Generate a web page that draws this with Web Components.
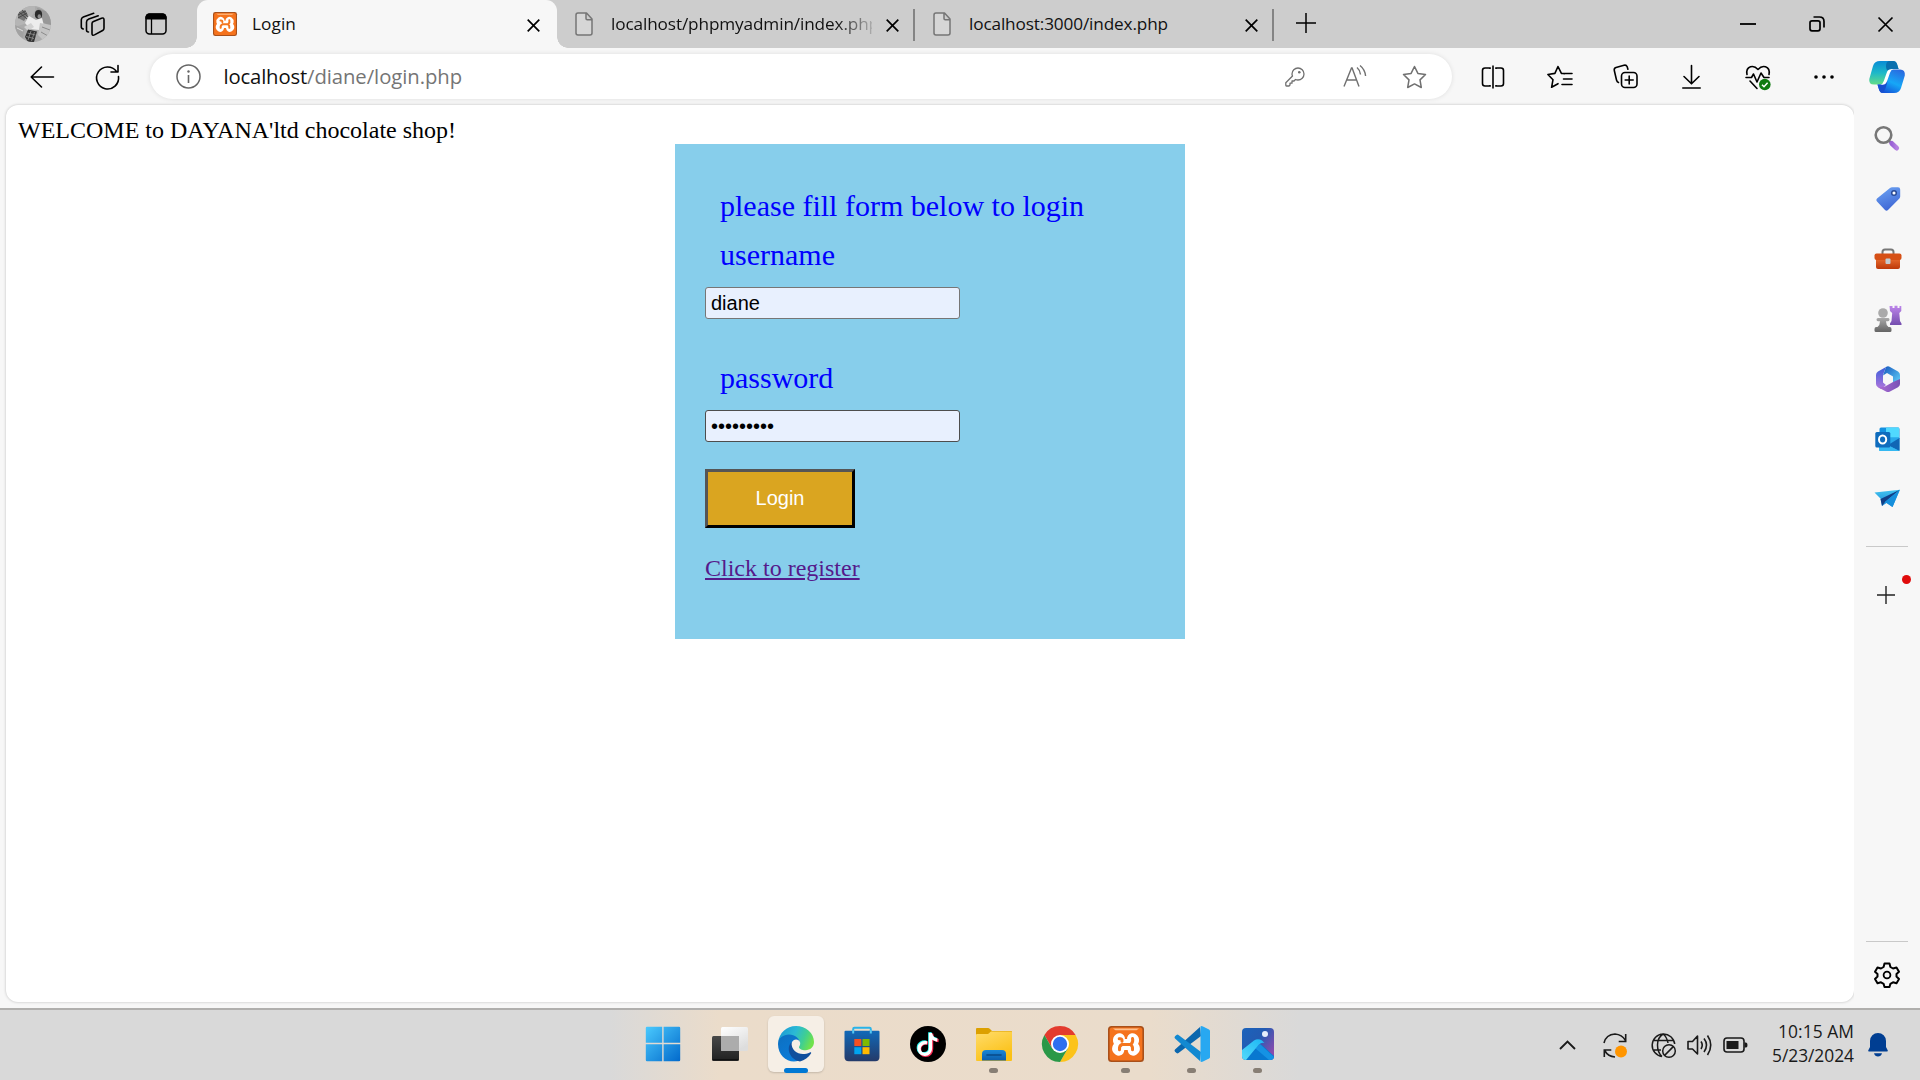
<!DOCTYPE html>
<html lang="en">
<head>
<meta charset="utf-8">
<title>Login</title>
<style>
html,body{margin:0;padding:0}
body{width:1920px;height:1080px;overflow:hidden;background:#f7f7f7;font-family:"Open Sans","Noto Sans",sans-serif}
</style>
</head>
<body>
<desktop-screen></desktop-screen>
<script>
const XAMPP = `<rect width="36" height="36" rx="3.5" fill="#a9501a"/><rect x="1.6" y="1.6" width="32.8" height="32.8" rx="2.5" fill="#f5731d"/><path d="M5 2.500h26l-2.500 1.800h-21z" fill="#ffc08c"/>
<path d="M11.500 12.800C8.500 15 13 16.500 12.500 18.500 12 20.500 7.500 22 10.800 24.200M24.500 12.800C27.500 15 23 16.500 23.500 18.500 24 20.500 28.500 22 25.200 24.200M12.500 18.500h11" fill="none" stroke="#fff" stroke-width="11" stroke-linecap="round" stroke-linejoin="round"/>
<path d="M11.200 12.800Q14.500 12.200 14 15.200M24.500 12.500q1 3.500-1.500 5.600M24.500 23.800q.5-3.800-2-5.300M11.500 23.800q-.5-4 2.500-5.300H23" fill="none" stroke="#f4761f" stroke-width="3" stroke-linecap="round"/>`;
const K = 'fill="none" stroke="currentColor" stroke-width="1.6" stroke-linecap="round" stroke-linejoin="round"';
/* name: [width, height, markup] */
const ICONS = {
avatar:[36,36,`<defs><clipPath id="c"><circle cx="18" cy="18" r="18"/></clipPath></defs><g clip-path="url(#c)"><path fill="#ababab" d="M0 0h36v36H0z"/><path d="M0 0h20v5l-8 12-12 4z" fill="#b5b5b5"/><path d="M3 6l7-2 3 5-4 6-6-3z" fill="#777"/><path d="M4 6l8 7M7 4l6 7M3 12l9-5M3 9l8-4" stroke="#3c3c3c" stroke-width=".8"/><path d="M22 2l14 5v13l-9-4z" fill="#989898"/><ellipse cx="23.500" cy="8.500" rx="3.600" ry="4.400" fill="#2b2b2b"/><ellipse cx="24.300" cy="10.500" rx="1.700" ry="2.300" fill="#8b8b8b"/><path d="M14 10l7 4 6-2 2 8-5 4-9-1-5-6z" fill="#ededed"/><path d="M9 21l7-4 3 4-6 4z" fill="#d2d2d2"/><path d="M13 23.500l9 2-3 10.500h-6l-3-5z" fill="#343434"/><path d="M12.500 27l8 2M11 30.500l8 2M16 25l-3 9M19.500 26l-3 9" stroke="#929292" stroke-width=".8"/><path d="M25 17l11 2v9l-8 6-5-5z" fill="#c4c4c4"/><path d="M26 26l7 4M27 21l8 3" stroke="#8a8a8a"/><path d="M0 19l9 4-1 9-8-4z" fill="#a2a2a2"/><path d="M2 22l6 3" stroke="#ddd"/></g>`],
workspaces:[26,26,`<g ${K}><path d="M12 12.500q0-1.500 1.500-2.100l8-3.200q2.500-.9 2.500 1.600v8.400q0 1.500-1.400 2.300l-8.100 4.400q-2.500 1.200-2.500-1.500z"/><path d="M18.200 4.700L8.800 8.100Q6.500 9 6.500 11v8q0 2 2 2M13.700 2.200L3.300 6Q1.300 6.800 1.300 8.800v7q0 2 2 2.200"/></g>`],
vertical:[22,22,`<rect x="1" y="1" width="20" height="20" rx="3.500" fill="none" stroke="#000" stroke-width="1.500"/><path d="M1 6V4q0-3 3-3h14q3 0 3 3v2z" stroke="#000"/><path d="M6.500 6v15" stroke="#000" stroke-width="1.300"/>`],
xampp:[24,24,`<g transform="scale(.6667)">${XAMPP}</g>`],
close:[13,13,`<path d="M.7.700l11.600 11.600M12.300.7L.7 12.300" stroke="#000" stroke-width="1.700" fill="none"/>`],
file:[18,24,`<path d="M3 1h8.500L17 7v14q0 2-2 2H3q-2 0-2-2V3q0-2 2-2zM11 1v5.500q0 1.200 1.200 1.200H17" fill="#d6d6d6" stroke="#757575" stroke-width="1.500" stroke-linejoin="round"/>`],
plus:[20,20,`<path d="M10 0v20M0 10h20" stroke="#000" stroke-width="1.500"/>`],
min:[16,16,`<path d="M0 8h16" stroke="#000" stroke-width="1.800"/>`],
restore:[16,16,`<rect x="1" y="4.800" width="10" height="10" rx="2" fill="none" stroke="#000" stroke-width="1.700"/><path d="M4.500 1h6Q15 1 15 5.500v6" fill="none" stroke="#000" stroke-width="1.700"/>`],
wclose:[15,15,`<path d="M.5.500l14 14M14.500.5l-14 14" stroke="#000" stroke-width="1.700"/>`],
back:[24,22,`<path d="M23.500 11H1.200M11.500 1L1.200 11l10.300 10" ${K}/>`],
refresh:[25,25,`<path d="M21.500 7.500A11 11 0 1 0 23.500 12.500M23 1.500V8h-7" ${K}/>`],
info:[25,25,`<circle cx="12.500" cy="12.500" r="11.500" fill="none" stroke="#666" stroke-width="1.500"/><path d="M12.500 11v8" stroke="#666" stroke-width="1.600"/><circle cx="12.500" cy="7.500" r="1.200" fill="#666"/>`],
key:[20,20,`<path d="M13 1a6 6 0 0 1 0 12q-1.300 0-2.500-.5L9 14H7v2.200H5V18l-1 1H1.500q-.7 0-.7-.8V15.800L7.500 9Q7 8 7 7a6 6 0 0 1 6-6z" fill="none" stroke="#707070" stroke-width="1.300" stroke-linejoin="round"/><circle cx="14.300" cy="5.200" r="1.300" fill="#707070"/>`],
read:[24,22,`<path d="M1 21.500L8.500 3h.6L16 21.500M3.600 15h10M14 2.500q3 2.500 3.500 7M17 .5q5 4 5.600 10.500" fill="none" stroke="#707070" stroke-width="1.400"/>`],
star:[25,24,`<path d="M12.500 1.500l3.400 6.900 7.600 1.100-5.500 5.400 1.300 7.600-6.800-3.600-6.800 3.600L7 14.900 1.500 9.500l7.600-1.100z" fill="none" stroke="#707070" stroke-width="1.500" stroke-linejoin="round"/>`],
split:[24,24,`<path d="M9 3H4Q1.500 3 1.500 5.500v13Q1.500 21 4 21h5zM15 3h5q2.500 0 2.500 2.500v13Q22.500 21 20 21h-5z" fill="none" stroke="currentColor" stroke-width="1.600"/><path d="M9 4v16M15 4v16" stroke="#f7f7f7" stroke-width="2.200"/><path d="M12 .5v23" stroke="currentColor" stroke-width="1.600"/>`],
favs:[26,24,`<path d="M14.500 8.400h-.1L11 1.500 7.900 8.400.9 9.500 6 14.700l-1.400 7.600 6.400-3.600M17.500 8.600l-3-.3M15 8.500h10M16.500 14H25M15 19.500h10" ${K}/>`],
collect:[26,25,`<rect x="8.500" y="8.500" width="15.500" height="15" rx="3.500" ${K}/><path d="M16.200 12v8M12.200 16h8M5.500 18.500Q4 18 3.500 16L1.300 6.500q-.5-2.300 1.700-3L11 1.300q2.300-.6 3.200 1.500l.7 2.400" ${K}/>`],
download:[19,24,`<path d="M9.500.5v18M2 11.500l7.500 7.300 7.500-7.300M.8 23h17.400" ${K}/>`],
heart:[26,26,`<path d="M2 9.500Q.8 3.500 5.500 1.800q4-1.300 7.500 2.700 3.500-4 7.500-2.700Q25.200 3.500 24 9.500M1 12.500h5.500l2-3.500 3.500 8 4-9 3 4.500h5M5 16l7 7.500" ${K}/><circle cx="19.800" cy="19.500" r="5.800" fill="#0f7b10"/><path d="M17 19.700l2 2 3.600-4" fill="none" stroke="#fff" stroke-width="1.500"/>`],
dots:[22,6,`<circle cx="3" cy="3" r="1.800"/><circle cx="11" cy="3" r="1.800"/><circle cx="19" cy="3" r="1.800"/>`],
copilot:[36,32,`<defs><linearGradient id="a" x1=".2" y1="0" x2=".2" y2="1"><stop stop-color="#098bd5"/><stop offset=".5" stop-color="#1db8c9"/><stop offset="1" stop-color="#62dc87"/></linearGradient><linearGradient id="b" x1=".8" y1="0" x2=".3" y2="1"><stop stop-color="#2a69df"/><stop offset=".55" stop-color="#16a7f7"/><stop offset="1" stop-color="#1454d8"/></linearGradient></defs><path d="M11 0h13q3 0 4 3l1.500 5H24q-3 0-4 3l-3 9q-1 3.500-5 3.500H5Q-.5 23.500.3 18L4 5Q5.500 0 11 0z" fill="url(#a)"/><path d="M24 0q3 0 4 3l1.600 5H23q-3 0-3.700 2Q17 9 17 5q0-5 4-5z" fill="#096fae"/><path d="M24 8.500h7q5.500 0 4.800 6L32 27q-1.500 5-7 5H14q-3 0-4-3.500l-1.500-5H13q3 0 4-3l2.800-8.500q1-3.500 4.200-3.500z" fill="url(#b)"/><path d="M8.500 23.500H13q3 0 4-3L18 17q1 4-1 9-2 5-4 6-2-.5-3-3.500z" fill="#174fcf"/><path d="M24.500 8.300h-2.200q-3.500 0-4.500 3.200l-3 8.500q-1 3.200-3.500 3.700h2.200q3.200 0 4.500-3.500l3-8.500q1-3 3.500-3.400z" fill="#fff"/>`],
search:[26,26,`<defs><linearGradient id="a"><stop stop-color="#9a62d6"/><stop offset="1" stop-color="#b581e0"/></linearGradient></defs><circle cx="9.500" cy="9" r="7.800" fill="none" stroke="#777" stroke-width="2.600"/><path d="M15 14.800l4 3.800" stroke="#777" stroke-width="2.500"/><path d="M17.800 17.500l4.800 4.500" stroke="url(#a)" stroke-width="5" stroke-linecap="round"/>`],
tag:[25,25,`<defs><linearGradient id="a" x2=".4" y2="1"><stop stop-color="#6fa6f4"/><stop offset="1" stop-color="#4069d6"/></linearGradient></defs><path d="M14 1q1-.7 2-.7h6q2.200 0 2.200 2.200v7q0 1-.8 2L12 23q-1.500 1.500-3 0L1 14.500q-1.500-1.500 0-3z" fill="url(#a)"/><circle cx="18" cy="6" r="2.300" fill="#fff" stroke="#294a96" stroke-width="1.500"/>`],
tools:[28,22,`<defs><linearGradient id="a" x2="0" y2="1"><stop stop-color="#ee7334"/><stop offset="1" stop-color="#bd390a"/></linearGradient></defs><path d="M8.500 6.500V4q0-2.500 2.500-2.500h6q2.500 0 2.500 2.500v2.500" fill="none" stroke="#777" stroke-width="2"/><rect x="2" y="9" width="24" height="12" rx="2" fill="url(#a)"/><rect x=".5" y="5.500" width="27" height="6.500" rx="2" fill="#d65016"/><rect x="11.500" y="10.500" width="5" height="5.500" rx="1" fill="#c4cbd0"/>`],
chess:[28,28,`<defs><linearGradient id="a" x2="0" y2="1"><stop stop-color="#bd85ea"/><stop offset="1" stop-color="#744eae"/></linearGradient><linearGradient id="b" x2="0" y2="1"><stop stop-color="#aaa"/><stop offset="1" stop-color="#646464"/></linearGradient></defs><path d="M15.500 1h3v2h2V.8h3V3h2V1h1.800v5l-2 2 .7 8 1.500 2.500V20H16v-1.500l1.500-2.500.7-8-2.200-2z" fill="url(#a)"/><circle cx="9" cy="8" r="4.800" fill="#aaa"/><path d="M4 13q-1.500 0-1.500 1.500T4 16.200h2Q6 20 3.500 22H2.200Q.5 22 .5 24v1.500q0 1.500 1.500 1.500h14q1.500 0 1.500-1.500V24q0-2-1.700-2h-1.300Q12 20 12 16.200h2q1.500 0 1.500-1.700T14 13z" fill="url(#b)"/>`],
m365:[24,26,`<defs><linearGradient id="a" x1="0" y1="0" x2="0" y2="1"><stop stop-color="#3a5fdb"/><stop offset="1" stop-color="#b176dc"/></linearGradient><linearGradient id="b" y1="0" x2="1" y2="1"><stop stop-color="#1557bd"/><stop offset="1" stop-color="#64d4fb"/></linearGradient><linearGradient id="c" x2="1"><stop stop-color="#ac6dd6"/><stop offset="1" stop-color="#7752b4"/></linearGradient></defs><path d="M10 1L2 5.500Q0 6.800 0 9v9q0 2 2 3.300l3 1.700 5-4-3-2.500V9z" fill="url(#a)"/><path d="M10 1q2-1.300 4 0l8 4.500Q24 6.800 24 9v9l-7-2V10.500L11 7l-4 2.500z" fill="url(#b)"/><path d="M24 13v5q0 2-2 3.300L14 25.500q-2 1-4 0L2 21.300l7-.8 8-4.500z" fill="url(#c)"/><path d="M12 8.500l4.300 2.500v4.500L12 18l-4.300-2.500V11z" fill="#f7f7f7"/>`],
outlook:[25,25,`<path d="M6 .5h17q1.500 0 1.500 1.500v10H4.500V2Q4.500.5 6 .5z" fill="#1490df"/><path d="M11 .5h13v10H11z" fill="#50d9ff"/><path d="M4 11h20.500v11.500q0 1.500-1.500 1.500H5.500Q4 24 4 22.500z" fill="#28a8ea"/><path d="M24.500 11v13L13 18z" fill="#1066b5"/><path d="M4 20l8-2 12.500 6H5.500Q4 24 4 22.500z" fill="#35b8f1"/><rect x=".3" y="5" width="15" height="15.500" rx="1.500" fill="#0f6cbd"/><ellipse cx="7.600" cy="12.500" rx="3.600" ry="4" fill="none" stroke="#fff" stroke-width="2"/>`],
send:[27,20,`<defs><linearGradient id="a" x2="0" y2="1"><stop stop-color="#43c3ef"/><stop offset="1" stop-color="#1688d8"/></linearGradient></defs><path d="M.5 3.500L26 .7 18.500 18 12.500 14 8 17 6.500 9.500z" fill="url(#a)"/><path d="M25.800.8L6.500 10 8 17l3-4z" fill="#123f86"/><path d="M25.800.8L11 12.800l7.500 5.200z" fill="#168fdc"/>`],
plus2:[18,18,`<path d="M9 0v18M0 9h18" stroke="#222" stroke-width="1.400"/>`],
gear:[26,26,`<path d="M10.500 1.500h5l.9 3.500 2.600 1.500 3.500-1 2.500 4.300L22.500 12v2.500L25 17l-2.500 4.300-3.500-1-2.600 1.500-.9 3.200h-5l-.9-3.200L7 20.300l-3.500 1L1 17l2.500-2.500V12L1 9.800l2.500-4.300 3.500 1L9.600 5z" ${K} style="stroke-width:2"/><circle cx="13" cy="13" r="3.400" fill="none" stroke="#000" stroke-width="1.800"/>`],
start:[36,36,`<defs><linearGradient id="a" gradientUnits="userSpaceOnUse" x1="0" y1="0" x2="36" y2="36"><stop stop-color="#4cccff"/><stop offset="1" stop-color="#0067ca"/></linearGradient></defs><g fill="url(#a)"><path d="M2 .8h15.200v15.900H.8V2q0-1.200 1.200-1.200zM18.600.8H34q1.200 0 1.200 1.200v14.700H18.600zM.8 18.300h16.400v16.900H2Q.8 35.200.8 34zM18.600 18.300h16.600V34q0 1.200-1.200 1.200H18.600z"/></g>`],
taskview:[36,36,`<defs><linearGradient id="a" x2="0" y2="1"><stop stop-color="#484848"/><stop offset="1" stop-color="#202020"/></linearGradient><linearGradient id="b" x2=".6" y2="1"><stop stop-color="#fff"/><stop offset="1" stop-color="#ddd"/></linearGradient></defs><rect y="10" width="27" height="25" rx="1.500" fill="url(#a)"/><rect x="9" y="1" width="27" height="24" rx="1.500" fill="url(#b)"/><path d="M9 10h18v15H10.500Q9 25 9 23.500z" fill="#acacac"/><path d="M1 33.500h25" stroke="#111"/>`],
edge:[36,36,`<defs><linearGradient id="a" x1="0" y1=".2" x2="1" y2=".5"><stop stop-color="#1a98d4"/><stop offset=".45" stop-color="#2bb9d5"/><stop offset=".75" stop-color="#40cf91"/><stop offset="1" stop-color="#70e24b"/></linearGradient><linearGradient id="b" x1="0" y1="0" x2=".7" y2="1"><stop stop-color="#0d6fc0"/><stop offset="1" stop-color="#0b7ddb"/></linearGradient></defs><path d="M.2 16.500C1 7 8.500 0 18 0c10 0 18 7.200 18 16 0 5-4 8.200-8.500 8.200-4 0-6.500-1.600-6.500-3 0-1 1.200-1.500 1.200-4 0-3.500-3.500-6-8-6C7 11.200.2 14 .2 16.500z" fill="url(#a)"/><path d="M0 18C0 12 5.500 8.500 11 8.500c6 0 10.500 4 11 8-.5-1.800-2-3-4-3-3 0-5 3-5 7 0 7 6 12 12 11.800C15 40 0 33 0 18z" fill="url(#b)"/><path d="M13.500 16C7.500 22 12 34 22 35.400c4.500-1 8.500-4 11-7.900.6-1-.2-1.700-1.200-1.100-8 4.100-18.800.6-18.300-10.400z" fill="#114f9d"/>`],
store:[36,36,`<defs><linearGradient id="a" x2="0" y2="1"><stop stop-color="#1169b8"/><stop offset="1" stop-color="#243a69"/></linearGradient></defs><path d="M9.200 8V3q0-1.200 1.200-1.200h15.200q1.200 0 1.200 1.200v5" fill="none" stroke="#29b3e9" stroke-width="2"/><path d="M.5 5.800q0-1 1-1h33q1 0 1 1V31q0 4.200-4.200 4.200H4.700Q.5 35.200.5 31z" fill="url(#a)"/><path d="M9.200 4v3.500M26.800 4v3.500" stroke="#55c8f2" stroke-width="2"/><path d="M10.300 13h7v7h-7z" fill="#f25022"/><path d="M18.500 13h7v7h-7z" fill="#7fba00"/><path d="M10.300 21.200h7v7h-7z" fill="#00a4ef"/><path d="M18.500 21.200h7v7h-7z" fill="#ffb900"/>`],
tiktok:[36,36,`<circle cx="18" cy="18" r="18"/><g fill="none" stroke-width="3.300"><path d="M17.300 16.500c-4-.8-8.300 1.500-8.300 6 0 3.500 2.700 6.300 6 6.300 3.700 0 6-2.500 6-6.300V7c.3 4 3 6.800 7 7" stroke="#fe2c55" transform="translate(.6 .6)"/><path d="M16.500 16.500c-4-.8-8 1.500-8 5.700 0 3.500 2.500 5.800 5.800 5.800 3.400 0 5.700-2.500 5.700-6V6.500c.3 4 3 6.500 6.500 7" stroke="#25f4ee" transform="translate(-.2 -.3)"/><path d="M17 16.800c-4-.8-7.900 1.500-7.900 5.600 0 3.500 2.500 5.900 5.600 5.900 3.500 0 5.800-2.500 5.800-6V7c.3 4 3 6.500 6.800 7" stroke="#fff"/></g>`],
explorer:[36,36,`<defs><linearGradient id="a" x2=".5" y2="1"><stop stop-color="#ffdc6b"/><stop offset="1" stop-color="#fbc116"/></linearGradient><linearGradient id="b" x2="0" y2="1"><stop stop-color="#1987d8"/><stop offset="1" stop-color="#0c5dab"/></linearGradient></defs><path d="M0 3q0-1 1-1h11q1 0 2 1l2 2h19q1 0 1 1v6H0z" fill="#dca000"/><path d="M0 9q0-1 1-1h11l3-2.500h20q1 0 1 1V34q0 1-1 1H1q-1 0-1-1z" fill="url(#a)"/><path d="M6 34.500V28q0-4 4-4h16q4 0 4 4v6.500z" fill="url(#b)"/><path d="M11 29h14" stroke="#084988" stroke-width="1.600" stroke-linecap="round"/>`],
chrome:[36,36,`<path d="M2.400 9A18 18 0 0 1 33.600 9H18l-7.800 13.500z" fill="#e33b2e"/><path d="M33.600 9A18 18 0 0 1 18 36l7.800-13.500L18 9z" fill="#fcc31a"/><path d="M18 36A18 18 0 0 1 2.400 9l7.800 13.500h15.600z" fill="#2a9848"/><circle cx="18" cy="18" r="9" fill="#fff"/><circle cx="18" cy="18" r="7.200" fill="#2e6ff0"/>`],
xamppBig:[36,36,XAMPP],
vscode:[36,36,`<path d="M26 1L1 23.500q-1 1 0 2.200L2.500 27q1 .8 2 0L27 10z" fill="#0b67ae"/><path d="M26 35L1 12.500q-1-1 0-2.200L2.500 9q1-.8 2 0L27 26z" fill="#1389d1"/><path d="M26.500.4Q27.500-.2 29 .5l6 3q1 .5 1 1.500v26q0 1-1 1.500l-6 3q-1.500.7-2.500.1V26l0-16z" fill="#28a8f1"/>`],
photos:[32,32,`<defs><linearGradient id="a" x1="0" y1="0" x2="1" y2=".7"><stop stop-color="#1b63bb"/><stop offset=".5" stop-color="#235bb2"/><stop offset="1" stop-color="#8a4bae"/></linearGradient><linearGradient id="b" x1=".8" y1="0" x2="0" y2="1"><stop stop-color="#20b9f5"/><stop offset="1" stop-color="#55dafa"/></linearGradient><clipPath id="c"><rect width="32" height="32" rx="4"/></clipPath></defs><g clip-path="url(#c)"><path d="M0 0h32v32H0z" fill="url(#a)"/><path d="M3 32l13-14q2.500-2 5 0L33 29v3z" fill="#0878d0"/><path d="M13 20l5-4 14 13v3h-5z" fill="#1592e4"/><path d="M0 22l12-9.500q4-2.500 8 0l2.500 2.500q-3-1-6 2L4 32H0z" fill="url(#b)"/><circle cx="23" cy="6" r="3" fill="#e6eefb"/></g>`],
chevron:[17,10,`<path d="M1 9l7.500-7.500L16 9" fill="none" stroke="#1a1a1a" stroke-width="1.900"/>`],
sync:[24,25,`<path d="M1 10Q3 1.500 12 1q7 .5 10.500 6.500M22.700 1v7.500h-7M1.300 24v-7h7M2 18q3 5.500 10 6" fill="none" stroke="#1a1a1a" stroke-width="1.600"/><circle cx="18" cy="18.500" r="6" fill="#ff9500"/>`],
globe:[25,25,`<g fill="none" stroke="#1a1a1a" stroke-width="1.500"><path d="M11 23.500A11.300 11.300 0 1 1 23.700 11M11 23.500Q6.500 19.500 6.500 12T12 1q4 3 5 9M2 7.500h20M2 17h8"/><circle cx="18" cy="18" r="6.300"/><path d="M22.300 13.600l-8.700 8.800"/></g>`],
volume:[25,22,`<path d="M1 7.500h4.500L10.500 2v18L5.500 15H1zM14 7.500q2.500 3.500 0 7.500M17 4.500q5 6.500 0 13.500M20.500 1.500q6.500 9.500 0 19.500" fill="none" stroke="#1a1a1a" stroke-width="1.600" stroke-linejoin="round"/>`],
battery:[25,16,`<rect x="1" y="1" width="20" height="14" rx="3" fill="none" stroke="#1a1a1a" stroke-width="1.600"/><path d="M3.500 4h12v8h-12zM21.500 5.500H23q1.500 0 1.500 2.500T23 10.500h-1.500z" fill="#1a1a1a"/>`],
bell:[20,24,`<path d="M10 0a8 8 0 0 1 8 8v6l1.800 3.500q.3 1-.8 1H1q-1 0-.8-1L2 14V8a8 8 0 0 1 8-8zM6 20.300h8Q13 23.500 10 23.500T6 20.300z" fill="#003e92"/>`]
};
const define = (name, html, setup) => {
  const t = document.createElement('template');
  t.innerHTML = html;
  customElements.define(name, class extends HTMLElement {
    connectedCallback() {
      if (this.shadowRoot) return;
      const root = this.attachShadow({mode:'open'});
      const content = t.content.cloneNode(true);
      if (setup) setup(this, content);
      root.appendChild(content);
      if (this.fit) this.fit();
    }
  });
};

define('ui-icon', `<style>:host{display:block;flex:none;color:#000}svg{display:block;overflow:visible}</style><div></div>`, (el, c) => {
  const [w,h,m] = ICONS[el.getAttribute('name')];
  c.querySelector('div').innerHTML = `<svg width="${w}" height="${h}" viewBox="0 0 ${w} ${h}">${m}</svg>`;
});

/* Text run whose letter-spacing is tuned so that it occupies the width given by w */
define('fit-text', `<style>:host{display:block;white-space:nowrap;flex:none}span{display:inline-block}</style><span><slot></slot></span>`, (el, c) => {
  const s = c.querySelector('span');
  el.fit = () => {
    s.style.letterSpacing = ((+el.getAttribute('w') - s.getBoundingClientRect().width) / el.textContent.length) + 'px';
  };
});

define('browser-tab', `<style>
:host{display:flex;box-sizing:border-box;width:359px;height:48px;align-items:center;padding:0 16px 0 18px;position:relative;font-size:17.200px;color:#111}
:host([active]){width:360px;background:#f7f7f7;border-radius:11px 11px 0 0;padding:0 17px 0 16px}
:host([fade]){width:358px}
:host([active])::before,:host([active])::after{content:"";position:absolute;bottom:0;width:11px;height:11px}
:host([active])::before{left:-11px;background:radial-gradient(circle at 0 0,transparent 10.500px,#f7f7f7 11px)}
:host([active])::after{right:-11px;background:radial-gradient(circle at 100% 0,transparent 10.500px,#f7f7f7 11px)}
:host([line]){border-right:2px solid #808080;border-image:linear-gradient(#0000 10px,#848484 10px,#848484 40px,#0000 40px) 1;padding-right:14px}
.t{flex:1;overflow:hidden;margin-left:18px;line-height:26px}
:host([active]) .t{margin-left:15px}
:host([fade]) .t{-webkit-mask:linear-gradient(90deg,#000 225px,transparent 268px)}
ui-icon.x{margin:2px 0 0 14px}
</style><ui-icon class="i"></ui-icon><div class="t"><slot></slot></div><ui-icon class="x" name="close"></ui-icon>`,
(el, c) => c.querySelector('.i').setAttribute('name', el.getAttribute('icon')));

define('tab-strip', `<style>
:host{display:flex;height:48px;background:#cdcdcd;align-items:center}
.l{display:flex;align-items:center;width:197px;box-sizing:border-box;padding-left:15px}
.w{display:flex;align-items:center;margin-left:auto;padding-right:27px}
</style>
<div class="l"><ui-icon name="avatar"></ui-icon><ui-icon name="workspaces" style="margin-left:29px"></ui-icon><ui-icon name="vertical" style="margin-left:39px"></ui-icon></div>
<browser-tab active icon="xampp"><fit-text w="44">Login</fit-text></browser-tab>
<browser-tab icon="file" line fade><fit-text w="268">localhost/phpmyadmin/index.php</fit-text></browser-tab>
<browser-tab icon="file" line><fit-text w="199">localhost:3000/index.php</fit-text></browser-tab>
<ui-icon name="plus" style="margin:-2px 0 0 22px"></ui-icon>
<div class="w"><ui-icon name="min"></ui-icon><ui-icon name="restore" style="margin-left:53px"></ui-icon><ui-icon name="wclose" style="margin-left:53px"></ui-icon></div>`);

define('address-bar', `<style>
:host{display:flex;align-items:center;width:1302px;height:45px;border-radius:23px;background:#fff;box-shadow:0 0 5px #0000001a;box-sizing:border-box;padding:0 25px 0 26px}
.u{margin-left:22.500px;font-size:20.300px;line-height:30px;color:#111;display:flex;padding-bottom:1px}
.u fit-text+fit-text{color:#757575}
.r{margin-left:auto;display:flex;align-items:center}
</style>
<ui-icon name="info"></ui-icon>
<div class="u"><fit-text w="83.500">localhost</fit-text><fit-text w="155">/diane/login.php</fit-text></div>
<div class="r"><ui-icon name="key"></ui-icon><ui-icon name="read" style="margin:-2px 0 0 38px"></ui-icon><ui-icon name="star" style="margin-left:35px"></ui-icon></div>`);

define('browser-toolbar', `<style>
:host{display:flex;height:57px;align-items:center;padding-left:30px;background:#f7f7f7;box-sizing:border-box}
ui-icon,address-bar{flex:none}
</style>
<ui-icon name="back"></ui-icon><ui-icon name="refresh" style="margin-left:41px"></ui-icon>
<address-bar style="margin-left:30px"></address-bar>
<ui-icon name="split" style="margin-left:29px"></ui-icon><ui-icon name="favs" style="margin-left:42px"></ui-icon><ui-icon name="collect" style="margin-left:40px"></ui-icon><ui-icon name="download" style="margin-left:43px"></ui-icon><ui-icon name="heart" style="margin:3px 0 0 44px"></ui-icon><ui-icon name="dots" style="margin-left:42px"></ui-icon><ui-icon name="copilot" style="margin-left:34px"></ui-icon>`);

define('login-form', `<style>
:host{display:block;box-sizing:border-box;width:510px;height:495px;background:#87ceeb;padding:37px 30px 0;margin-left:668px;font-family:"Liberation Serif",serif}
p,label{display:block;margin:0;padding-left:15px;font-size:30px;line-height:49px;color:#00f}
input{display:block;box-sizing:border-box;width:255px;height:32px;margin:8px 0 0;padding:1px 5px;border:1px solid #767676;border-radius:3px;background:#e8f0fe;font:20px "Liberation Sans",sans-serif;color:#000;outline:0}
.p{border-color:#4d4d4d}
.g{margin-top:34px}
button{display:block;box-sizing:border-box;width:150px;height:59px;margin:27px 0 0;padding:0;border:3px solid;border-color:#555 #000 #000 #555;background:#daa520;color:#fff;font:20px "Liberation Sans",sans-serif;border-radius:0}
a{display:inline-block;margin-top:26px;font-size:24px;line-height:28px;color:#551a8b;text-decoration:underline}
</style>
<p>please fill form below to login</p>
<label>username</label><input value="diane">
<label class="g">password</label><input class="p" type="password" value="chocolate">
<button>Login</button><a>Click to register</a>`);

define('web-page', `<style>
:host{display:block;box-sizing:border-box;width:1848px;height:897px;margin-left:6px;padding:12px 0 0 1px;background:#fff;border-radius:12px;box-shadow:0 0 3px #0000003d;font-family:"Liberation Serif",serif;font-size:24px;color:#000}
.h{line-height:27px;padding-left:11px}
</style><div class="h">WELCOME to DAYANA'ltd chocolate shop!</div><login-form></login-form>`);

define('side-bar', `<style>
:host{display:flex;flex-direction:column;width:66px;height:903px;background:#f7f7f7;align-items:center}
.c{height:60px;width:66px;flex:none;display:flex;align-items:center;justify-content:center}
hr{width:42px;height:1px;flex:none;background:#c9c9c9;border:0;margin:0}
.a{position:relative;margin-top:39px;margin-right:2px}
.a i{position:absolute;width:9px;height:9px;border-radius:50%;background:#e00b0b;left:25px;top:-11px}
.b{margin-top:auto;display:flex;flex-direction:column;align-items:center;padding-bottom:20px}
.s{height:4px;flex:none}
.r{margin-left:1px}
</style><div class="s"></div>
<div class="c"><ui-icon name="search"></ui-icon></div><div class="c"><ui-icon name="tag" style="margin-left:2px"></ui-icon></div><div class="c r"><ui-icon name="tools"></ui-icon></div><div class="c r"><ui-icon name="chess"></ui-icon></div><div class="c r"><ui-icon name="m365"></ui-icon></div><div class="c r"><ui-icon name="outlook"></ui-icon></div><div class="c"><ui-icon name="send"></ui-icon></div>
<hr style="margin-top:17px"><div class="a"><ui-icon name="plus2"></ui-icon><i></i></div>
<div class="b"><hr><ui-icon name="gear" style="margin-top:20px"></ui-icon></div>`);

define('task-button', `<style>
:host{display:flex;flex:none;width:66px;height:70px;align-items:center;justify-content:center;position:relative}
.k{display:flex;width:56px;height:56px;align-items:center;justify-content:center;border-radius:6px;margin-top:-2px}
:host([active]) .k{background:#f6efe6;box-shadow:0 1px 2px #0000002b}
:host([open])::after{content:"";position:absolute;bottom:7px;left:28px;width:9px;height:5px;border-radius:3px;background:#877e74}
:host([active])::after{content:"";position:absolute;bottom:7px;left:21px;width:24px;height:5px;border-radius:3px;background:#0078d4}
</style><div class="k"><slot></slot></div>`);

define('task-bar', `<style>
:host{display:flex;box-sizing:border-box;height:72px;border-top:2px solid #b0afad;background:linear-gradient(90deg,#ebdcca00 610px,#ebdcca 720px,#eadccb 1150px,#ebdcca00 1300px),#d9d9d9;padding-left:631px;align-items:center}
.t{display:flex;margin-left:auto;align-items:center;color:#1a1a1a;padding-right:32px}
.d{display:flex;flex-direction:column;align-items:flex-end;font-size:17.400px;line-height:24px;width:82px;margin-left:24px;margin-top:-4px}
</style>
<task-button><ui-icon name="start" style="margin-right:3px"></ui-icon></task-button><task-button><ui-icon name="taskview"></ui-icon></task-button><task-button active><ui-icon name="edge"></ui-icon></task-button><task-button><ui-icon name="store"></ui-icon></task-button><task-button><ui-icon name="tiktok"></ui-icon></task-button><task-button open><ui-icon name="explorer"></ui-icon></task-button><task-button><ui-icon name="chrome"></ui-icon></task-button><task-button open><ui-icon name="xamppBig"></ui-icon></task-button><task-button open><ui-icon name="vscode"></ui-icon></task-button><task-button open><ui-icon name="photos"></ui-icon></task-button>
<div class="t"><ui-icon name="chevron"></ui-icon><ui-icon name="sync" style="margin-left:27px"></ui-icon><ui-icon name="globe" style="margin-left:24px"></ui-icon><ui-icon name="volume" style="margin-left:11px"></ui-icon><ui-icon name="battery" style="margin-left:11px"></ui-icon>
<div class="d"><fit-text w="76">10:15 AM</fit-text><fit-text w="82">5/23/2024</fit-text></div><ui-icon name="bell" style="margin-left:14px"></ui-icon></div>`);

define('desktop-screen', `<style>
:host{display:flex;flex-direction:column;width:1920px;height:1080px;background:#f7f7f7}
.m{display:flex;height:903px}
</style><tab-strip></tab-strip><browser-toolbar></browser-toolbar><div class="m"><web-page></web-page><side-bar></side-bar></div><task-bar></task-bar>`);
</script>
</body>
</html>
